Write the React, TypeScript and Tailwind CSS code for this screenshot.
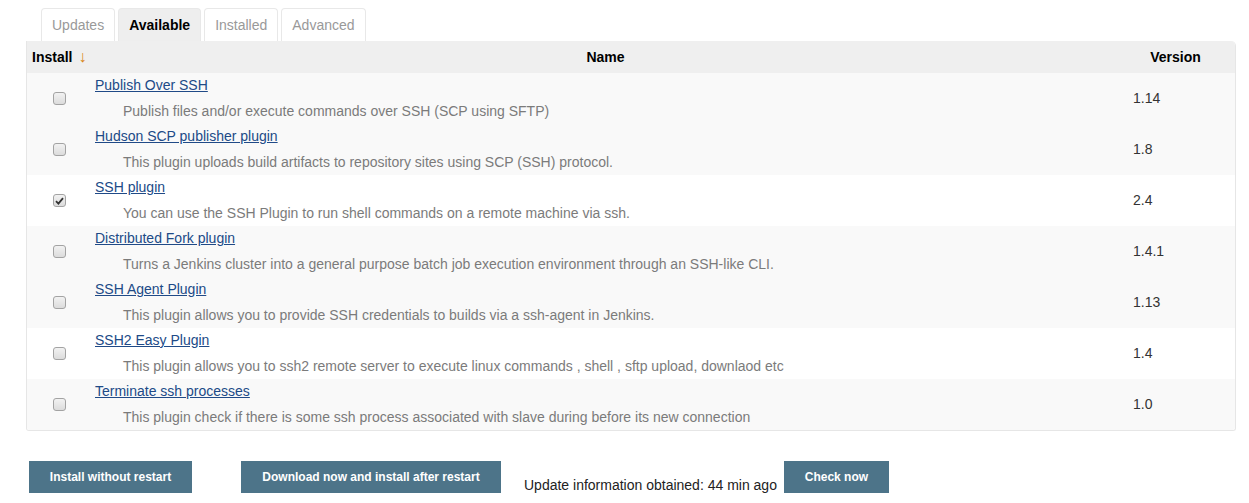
import React from "react";

interface Plugin {
  name: string;
  description: string;
  version: string;
  checked?: boolean;
  shaded: boolean;
}

const plugins: Plugin[] = [
  { name: "Publish Over SSH", description: "Publish files and/or execute commands over SSH (SCP using SFTP)", version: "1.14", shaded: true },
  { name: "Hudson SCP publisher plugin", description: "This plugin uploads build artifacts to repository sites using SCP (SSH) protocol.", version: "1.8", shaded: true },
  { name: "SSH plugin", description: "You can use the SSH Plugin to run shell commands on a remote machine via ssh.", version: "2.4", checked: true, shaded: false },
  { name: "Distributed Fork plugin", description: "Turns a Jenkins cluster into a general purpose batch job execution environment through an SSH-like CLI.", version: "1.4.1", shaded: true },
  { name: "SSH Agent Plugin", description: "This plugin allows you to provide SSH credentials to builds via a ssh-agent in Jenkins.", version: "1.13", shaded: true },
  { name: "SSH2 Easy Plugin", description: "This plugin allows you to ssh2 remote server to execute linux commands , shell , sftp upload, downlaod etc", version: "1.4", shaded: false },
  { name: "Terminate ssh processes", description: "This plugin check if there is some ssh process associated with slave during before its new connection", version: "1.0", shaded: true },
];

const tabs = ["Updates", "Available", "Installed", "Advanced"];

function Checkbox({ checked }: { checked?: boolean }) {
  return (
    <span className="flex h-[13px] w-[13px] items-center justify-center rounded-[3px] border border-[#a3a3a3] bg-gradient-to-b from-[#f2f2f2] to-[#dcdcdc]">
      {checked && (
        <svg width="9" height="8" viewBox="0 0 9 8">
          <path d="M1 4.2 L3.4 6.6 L8 1.2" fill="none" stroke="#333" strokeWidth="1.8" />
        </svg>
      )}
    </span>
  );
}

export default function App() {
  return (
    <div className="w-[1249px] h-[503px] bg-white font-['Liberation_Sans',Arial,sans-serif] text-[14px] text-[#333]">
      {/* Tabs */}
      <div className="flex gap-[3px] pl-[41px] pt-[8px]">
        {tabs.map((tab) => (
          <div
            key={tab}
            className={
              tab === "Available"
                ? "flex h-[33px] items-center rounded-t-[4px] border border-b-0 border-[#e8e8e8] bg-[#eeeeee] px-[10px] font-bold text-black"
                : "flex h-[33px] items-center rounded-t-[4px] border border-b-0 border-[#e8e8e8] bg-white px-[10px] text-[#999]"
            }
          >
            {tab}
          </div>
        ))}
      </div>

      {/* Table */}
      <div className="ml-[26px] w-[1210px] overflow-hidden rounded-tr-[5px] rounded-b-[3px] border border-t-0 border-[#e6e6e6]">
        <div className="flex h-[32px] items-center bg-[#efefef] font-bold text-black">
          <div className="flex w-[60px] items-center pl-[5px]">
            Install <span className="ml-[6px] text-[16px] font-normal leading-none text-[#d9861a]">↓</span>
          </div>
          <div className="flex-1 text-center">Name</div>
          <div className="w-[111px] pr-[8px] text-center">Version</div>
        </div>
        {plugins.map((p) => (
          <div key={p.name} className={`flex h-[51px] ${p.shaded ? "bg-[#f9f9f9]" : "bg-white"}`}>
            <div className="flex w-[60px] items-center justify-center pl-[4px]">
              <Checkbox checked={p.checked} />
            </div>
            <div className="flex flex-1 flex-col pl-[8px] pt-[4px] leading-[17px]">
              <a href="#" className="w-fit text-[#204a87] underline">
                {p.name}
              </a>
              <div className="mt-[9px] pl-[28px] text-[#7b7b7b]">{p.description}</div>
            </div>
            <div className="flex w-[111px] items-center pl-[9px] text-[#333]">{p.version}</div>
          </div>
        ))}
      </div>

      {/* Buttons */}
      <div className="mt-[30px] flex items-end pl-[29px]">
        <button className="h-[32px] w-[163px] bg-[#4d7489] text-[12px] font-bold text-white">
          Install without restart
        </button>
        <button className="ml-[49px] h-[32px] w-[260px] bg-[#4d7489] text-[12px] font-bold text-white">
          Download now and install after restart
        </button>
        <span className="ml-[23px] leading-[16px] text-[#222]">Update information obtained: 44 min ago</span>
        <button className="ml-[7px] h-[32px] w-[105px] bg-[#4d7489] text-[12px] font-bold text-white">
          Check now
        </button>
      </div>
    </div>
  );
}
